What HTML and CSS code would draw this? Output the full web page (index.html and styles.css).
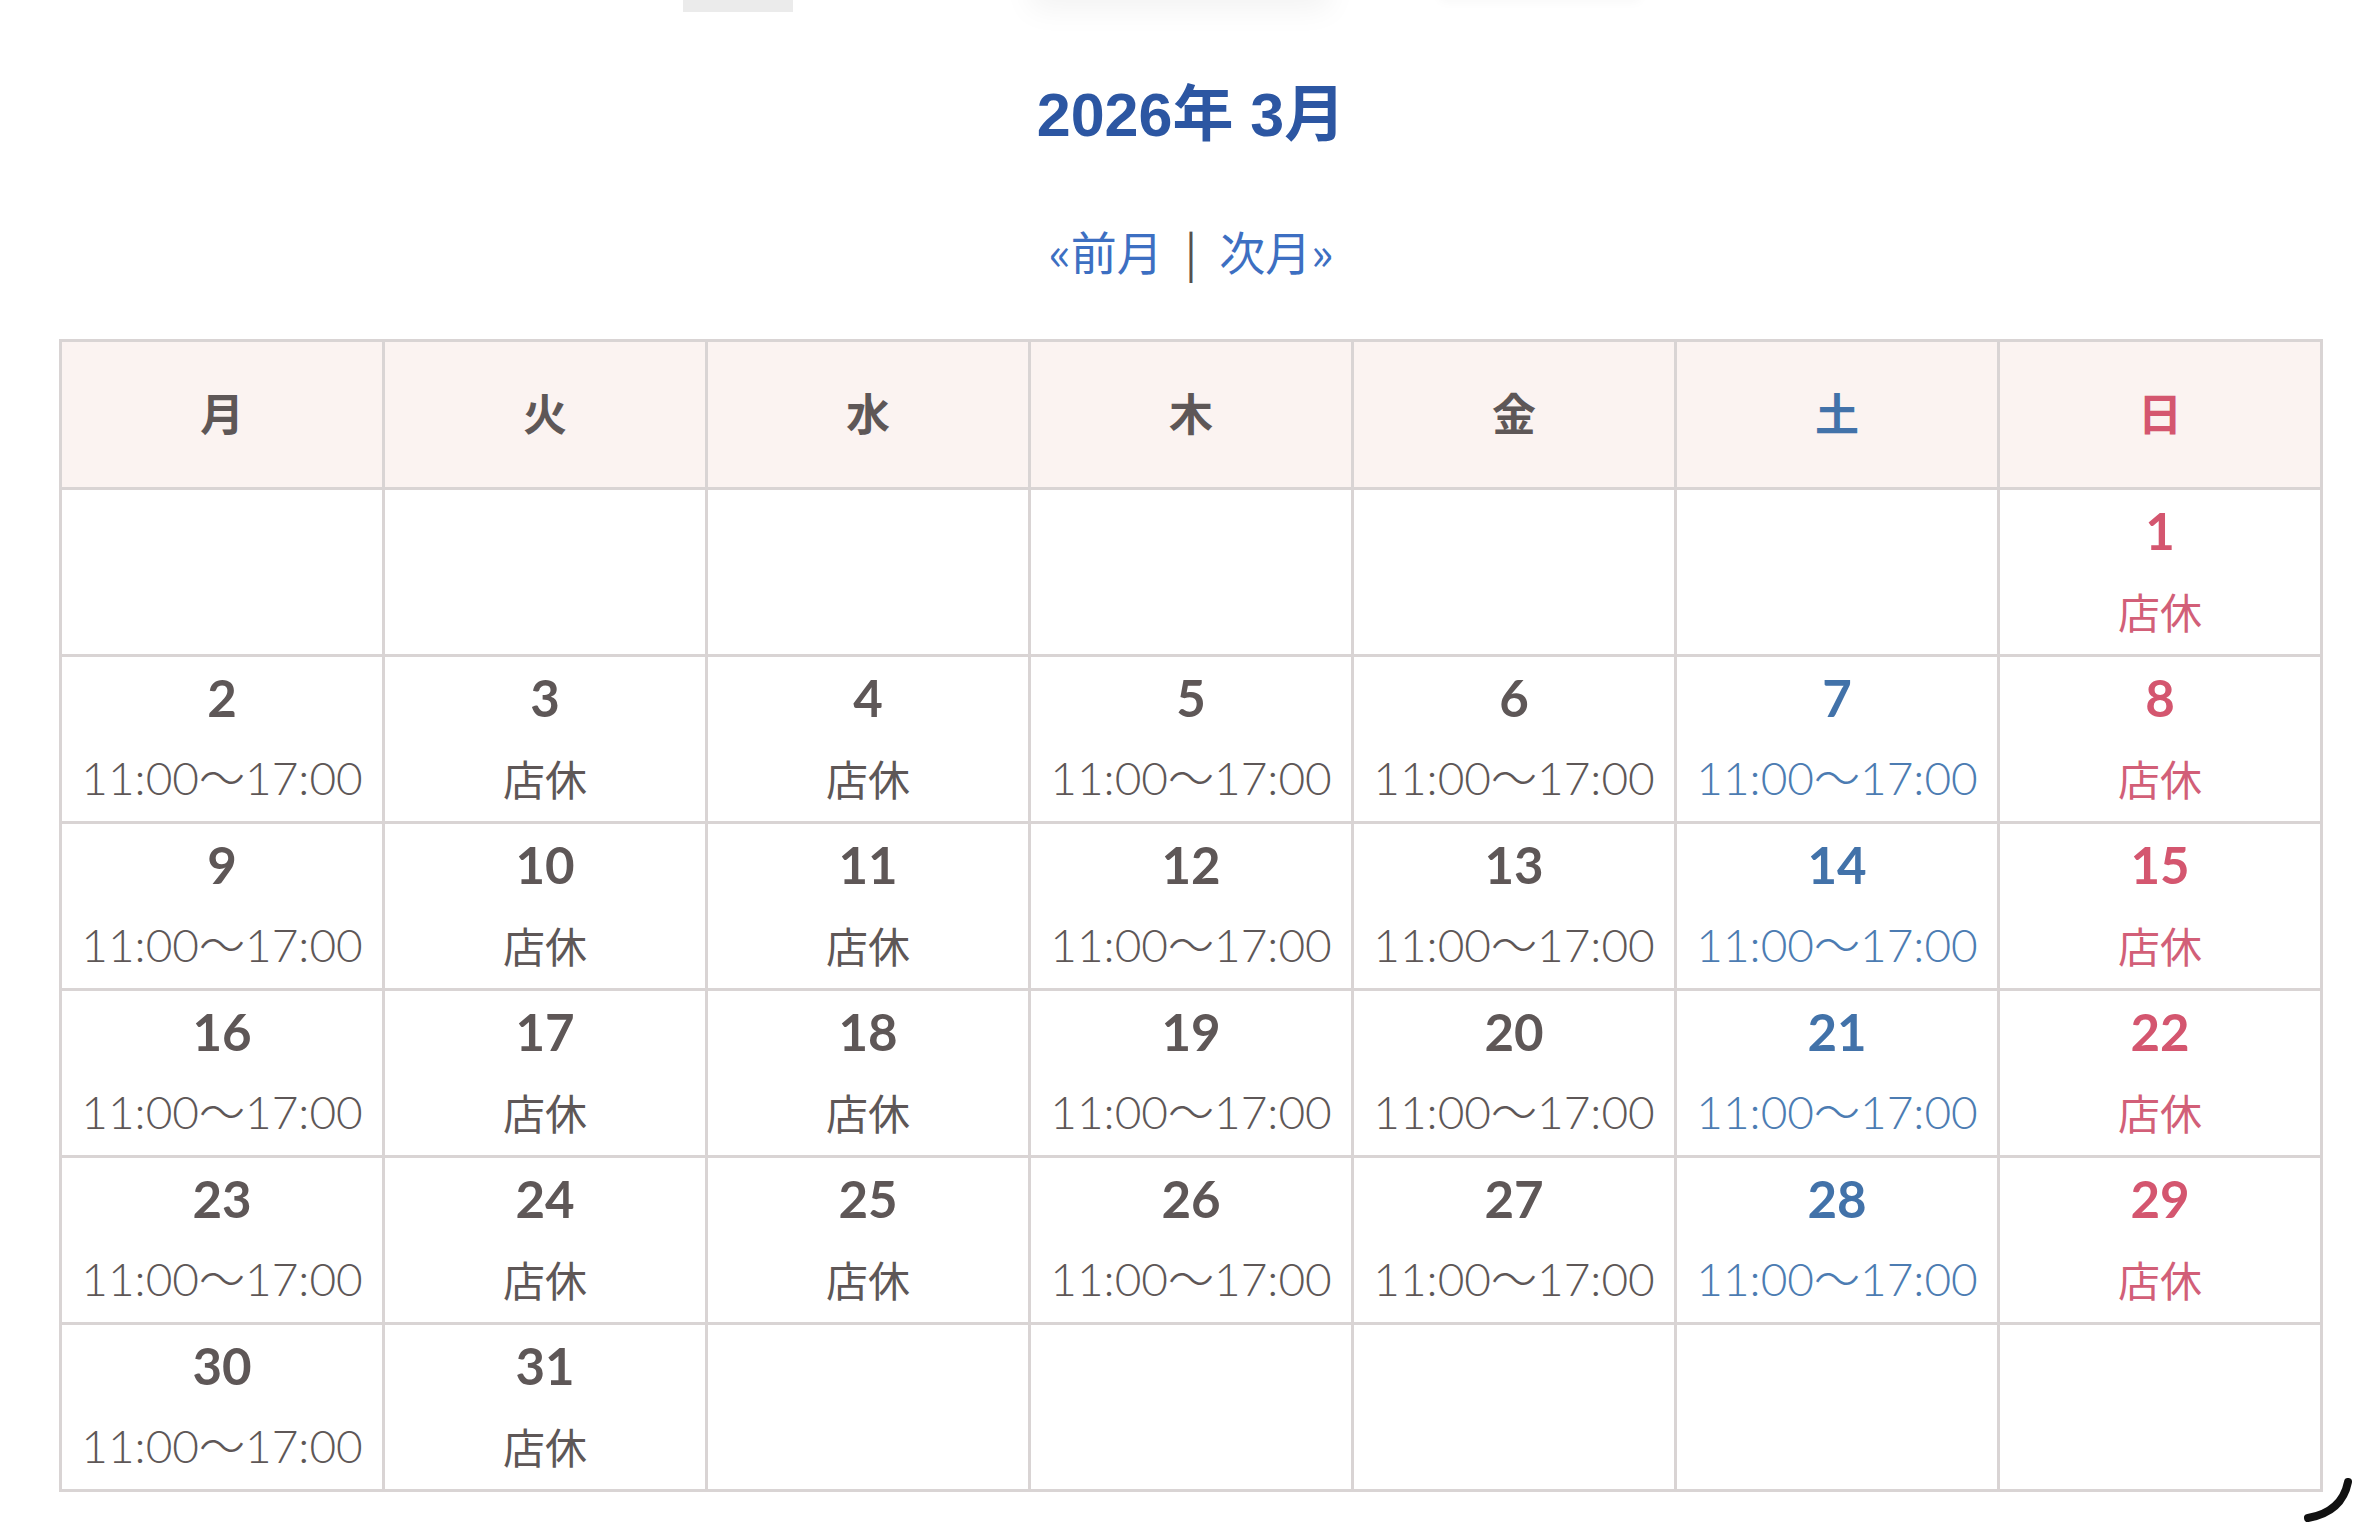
FILE: index.html
```html
<!DOCTYPE html>
<html lang="ja">
<head>
<meta charset="utf-8">
<title>2026年 3月</title>
<link rel="stylesheet" href="styles.css">
</head>
<body>
<div class="top-remnant">
  <span class="tab-bar"></span>
  <span class="shadow-box shadow-a"></span>
  <span class="shadow-box shadow-b"></span>
</div>
<main class="calendar">
  <h2 class="cal-title">2026年 3月</h2>
  <p class="cal-nav"><a class="nav-link" href="#">«前月</a><span class="sep">|</span><a class="nav-link" href="#">次月»</a></p>
  <table class="cal-table">
    <thead>
      <tr>
        <th>月</th><th>火</th><th>水</th><th>木</th><th>金</th><th class="sat">土</th><th class="sun">日</th>
      </tr>
    </thead>
    <tbody>
      <tr>
        <td></td><td></td><td></td><td></td><td></td><td class="sat"></td>
        <td class="sun"><span class="num">1</span><span class="info">店休</span></td>
      </tr>
      <tr>
        <td><span class="num">2</span><span class="info time">11:00〜17:00</span></td>
        <td><span class="num">3</span><span class="info">店休</span></td>
        <td><span class="num">4</span><span class="info">店休</span></td>
        <td><span class="num">5</span><span class="info time">11:00〜17:00</span></td>
        <td><span class="num">6</span><span class="info time">11:00〜17:00</span></td>
        <td class="sat"><span class="num">7</span><span class="info time">11:00〜17:00</span></td>
        <td class="sun"><span class="num">8</span><span class="info">店休</span></td>
      </tr>
      <tr>
        <td><span class="num">9</span><span class="info time">11:00〜17:00</span></td>
        <td><span class="num">10</span><span class="info">店休</span></td>
        <td><span class="num">11</span><span class="info">店休</span></td>
        <td><span class="num">12</span><span class="info time">11:00〜17:00</span></td>
        <td><span class="num">13</span><span class="info time">11:00〜17:00</span></td>
        <td class="sat"><span class="num">14</span><span class="info time">11:00〜17:00</span></td>
        <td class="sun"><span class="num">15</span><span class="info">店休</span></td>
      </tr>
      <tr>
        <td><span class="num">16</span><span class="info time">11:00〜17:00</span></td>
        <td><span class="num">17</span><span class="info">店休</span></td>
        <td><span class="num">18</span><span class="info">店休</span></td>
        <td><span class="num">19</span><span class="info time">11:00〜17:00</span></td>
        <td><span class="num">20</span><span class="info time">11:00〜17:00</span></td>
        <td class="sat"><span class="num">21</span><span class="info time">11:00〜17:00</span></td>
        <td class="sun"><span class="num">22</span><span class="info">店休</span></td>
      </tr>
      <tr>
        <td><span class="num">23</span><span class="info time">11:00〜17:00</span></td>
        <td><span class="num">24</span><span class="info">店休</span></td>
        <td><span class="num">25</span><span class="info">店休</span></td>
        <td><span class="num">26</span><span class="info time">11:00〜17:00</span></td>
        <td><span class="num">27</span><span class="info time">11:00〜17:00</span></td>
        <td class="sat"><span class="num">28</span><span class="info time">11:00〜17:00</span></td>
        <td class="sun"><span class="num">29</span><span class="info">店休</span></td>
      </tr>
      <tr>
        <td><span class="num">30</span><span class="info time">11:00〜17:00</span></td>
        <td><span class="num">31</span><span class="info">店休</span></td>
        <td></td><td></td><td></td><td class="sat"></td><td class="sun"></td>
      </tr>
    </tbody>
  </table>
</main>
<svg class="corner-mark" width="64" height="64" viewBox="0 0 64 64" aria-hidden="true">
  <path d="M50 6 Q 44 36 10 42" fill="none" stroke="#111" stroke-width="8" stroke-linecap="round"/>
</svg>
</body>
</html>
```

FILE: styles.css
```css
html, body {
  margin: 0;
  padding: 0;
  background: #ffffff;
}

body {
  position: relative;
  width: 2355px;
  height: 1532px;
  overflow: hidden;
  font-family: "Liberation Sans", "Noto Sans CJK JP", sans-serif;
  color: #5e5757;
}

.top-remnant {
  position: absolute;
  left: 0;
  top: 0;
  width: 100%;
  height: 0;
}

.tab-bar {
  position: absolute;
  left: 683px;
  top: 0;
  width: 110px;
  height: 12px;
  background: #ebebeb;
}

.shadow-box {
  position: absolute;
  top: -60px;
  height: 60px;
  background: #ffffff;
  box-shadow: 0 10px 30px rgba(0, 0, 0, 0.05);
}

.shadow-a {
  left: 1030px;
  width: 300px;
}

.shadow-b {
  left: 1440px;
  width: 200px;
  box-shadow: 0 2px 10px rgba(0, 0, 0, 0.03);
}

.calendar {
  padding: 80px 0 0 59px;
  width: 2264px;
}

.cal-title {
  margin: 0;
  text-align: center;
  font-family: "Liberation Sans", "Noto Sans CJK JP", sans-serif;
  font-weight: 700;
  font-size: 61px;
  line-height: 70px;
  color: #2c56a2;
}

.cal-nav {
  margin: 72px 0 0;
  text-align: center;
  font-family: "Noto Sans CJK JP", sans-serif;
  font-size: 46px;
  line-height: 56px;
}

.nav-link {
  color: #3d6fc2;
  text-decoration: none;
}

.sep {
  color: #555050;
  margin: 0 22px;
}

.cal-table {
  margin-top: 61px;
  width: 2264px;
  border-collapse: collapse;
  table-layout: fixed;
  border: 3px solid #d9d4d4;
}

.cal-table th,
.cal-table td {
  border: 3px solid #d9d4d4;
  text-align: center;
  padding: 0;
}

.cal-table th {
  height: 140px;
  padding-bottom: 5px;
  background: #fbf3f1;
  font-family: "Noto Sans CJK JP", sans-serif;
  font-weight: 700;
  font-size: 44px;
  color: #5e5757;
}

.cal-table td {
  height: 164px;
  vertical-align: top;
  background: #ffffff;
}

.num {
  display: block;
  margin-top: 13px;
  font-family: "Lato", "Liberation Sans", sans-serif;
  font-weight: 700;
  font-size: 51px;
  line-height: 56px;
  color: #5e5757;
}

.info {
  display: block;
  margin-top: 24px;
  font-family: "Noto Sans CJK JP", sans-serif;
  font-weight: 400;
  font-size: 42px;
  line-height: 56px;
  color: #5e5757;
}

.info.time {
  font-family: "Lato", "Noto Sans CJK JP", sans-serif;
  font-weight: 300;
  font-size: 46px;
}

.cal-table .sat,
.cal-table .sat .num {
  color: #4272a9;
}

.cal-table .sat .info {
  color: #4c7cb2;
}

.cal-table .sun,
.cal-table .sun .num {
  color: #d4566f;
}

.cal-table .sun .info {
  color: #d25f78;
}

.corner-mark {
  position: absolute;
  left: 2298px;
  top: 1476px;
}
```
